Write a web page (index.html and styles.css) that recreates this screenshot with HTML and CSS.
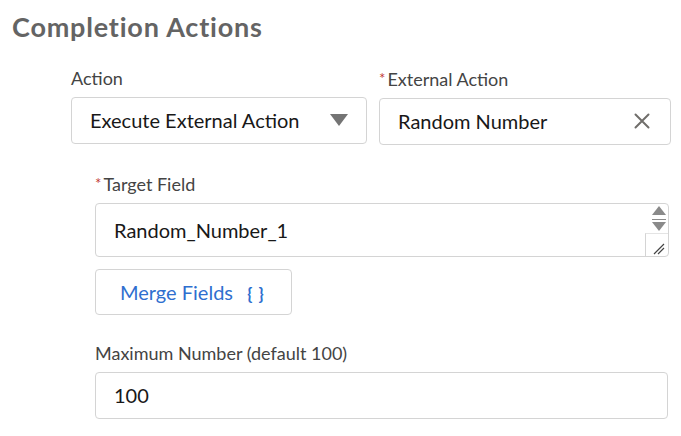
FILE: index.html
```html
<!DOCTYPE html>
<html>
<head>
<meta charset="utf-8">
<link rel="stylesheet" href="styles.css">
</head>
<body>
<div class="page">
  <h1 class="title">Completion Actions</h1>
  <div class="row1">
    <div class="field field-action">
      <div class="label">Action</div>
      <div class="box select">
        <span class="value">Execute External Action</span>
        <svg class="caret" width="18" height="12" viewBox="0 0 18 12"><path d="M0 0 H18 L9 12 Z" fill="#747474"/></svg>
      </div>
    </div>
    <div class="field field-ext">
      <div class="label"><span class="req">*</span>External Action</div>
      <div class="box">
        <span class="value">Random Number</span>
        <svg class="clear" width="16" height="16" viewBox="0 0 16 16"><path d="M1.5 1.5 L14.5 14.5 M14.5 1.5 L1.5 14.5" stroke="#706e6b" stroke-width="2" stroke-linecap="round"/></svg>
      </div>
    </div>
  </div>
  <div class="indent">
    <div class="field">
      <div class="label"><span class="req">*</span>Target Field</div>
      <div class="box textarea">
        <span class="value">Random_Number_1</span>
        <div class="side">
          <div class="spin">
            <svg width="14" height="26" viewBox="0 0 14 26"><path d="M0 9 L7 0 L14 9 Z" fill="#8a8a8a"/><path d="M0 13.5 H14" stroke="#8a8a8a" stroke-width="1"/><path d="M0 16 H14 L7 25 Z" fill="#8a8a8a"/></svg>
          </div>
          <div class="resize">
            <svg width="12" height="12" viewBox="0 0 12 12"><path d="M1 11 L11 1 M5 11 L11 5" stroke="#444" stroke-width="1.2"/></svg>
          </div>
        </div>
      </div>
    </div>
    <button class="merge">Merge Fields <span class="braces">{ }</span></button>
    <div class="field field-max">
      <div class="label">Maximum Number (default 100)</div>
      <div class="box max">
        <span class="value">100</span>
      </div>
    </div>
  </div>
</div>
</body>
</html>
```
FILE: styles.css
```css
html, body {
  margin: 0;
  padding: 0;
  background: #ffffff;
}
body {
  font-family: Lato, "Noto Sans", sans-serif;
  color: #181818;
}
.page {
  width: 681px;
  height: 436px;
  overflow: hidden;
}
.title {
  margin: 0;
  padding: 10px 0 0 12px;
  font-family: Lato, sans-serif;
  font-weight: 700;
  font-size: 27px;
  line-height: 34px;
  color: #646464;
  letter-spacing: 0.8px;
}
.row1 {
  display: flex;
  gap: 12px;
  margin: 23px 0 0 71px;
}
.field-action { width: 296px; }
.field-ext { width: 292px; }
.label {
  font-size: 18px;
  line-height: 22px;
  color: #444444;
  margin-bottom: 8px;
}
.req {
  color: #c23934;
  font-size: 15px;
  margin-right: 2px;
  vertical-align: 2px;
}
.box {
  box-sizing: border-box;
  height: 47px;
  border: 1px solid #d4d4d4;
  border-radius: 4px;
  display: flex;
  align-items: center;
  padding: 0 18px 2px 18px;
  font-size: 20px;
}
.select { justify-content: space-between; }
.field-ext .box { justify-content: space-between; padding-right: 20px; }
.indent {
  margin: 27px 0 0 95px;
  width: 574px;
}
.textarea {
  height: 54px;
  padding: 0 0 0 18px;
  justify-content: space-between;
  align-items: stretch;
}
.textarea .value {
  align-self: center;
}
.side {
  width: 23px;
  display: flex;
  flex-direction: column;
  align-items: flex-end;
}
.spin {
  height: 29px;
  width: 23px;
  display: flex;
  justify-content: center;
  padding-top: 2px;
  box-sizing: border-box;
  padding-left: 5px;
}
.resize {
  flex: 1;
  width: 23px;
  box-sizing: border-box;
  border-left: 1px solid #d4d4d4;
  border-top: 1px solid #e4e4e4;
  display: flex;
  align-items: flex-end;
  justify-content: flex-end;
  padding: 0 3px 1px 0;
}
.merge {
  display: block;
  margin-top: 12px;
  box-sizing: border-box;
  width: 197px;
  height: 46px;
  border: 1px solid #d4d4d4;
  border-radius: 4px;
  background: #ffffff;
  font-family: Lato, sans-serif;
  font-size: 20px;
  color: #2f6fcf;
  text-align: left;
  padding: 0 0 0 24px;
}
.braces {
  font-weight: 700;
  font-size: 17px;
  margin-left: 9px;
  letter-spacing: 1px;
}
.field-max { margin-top: 27px; }
.max { width: 573px; }
```
